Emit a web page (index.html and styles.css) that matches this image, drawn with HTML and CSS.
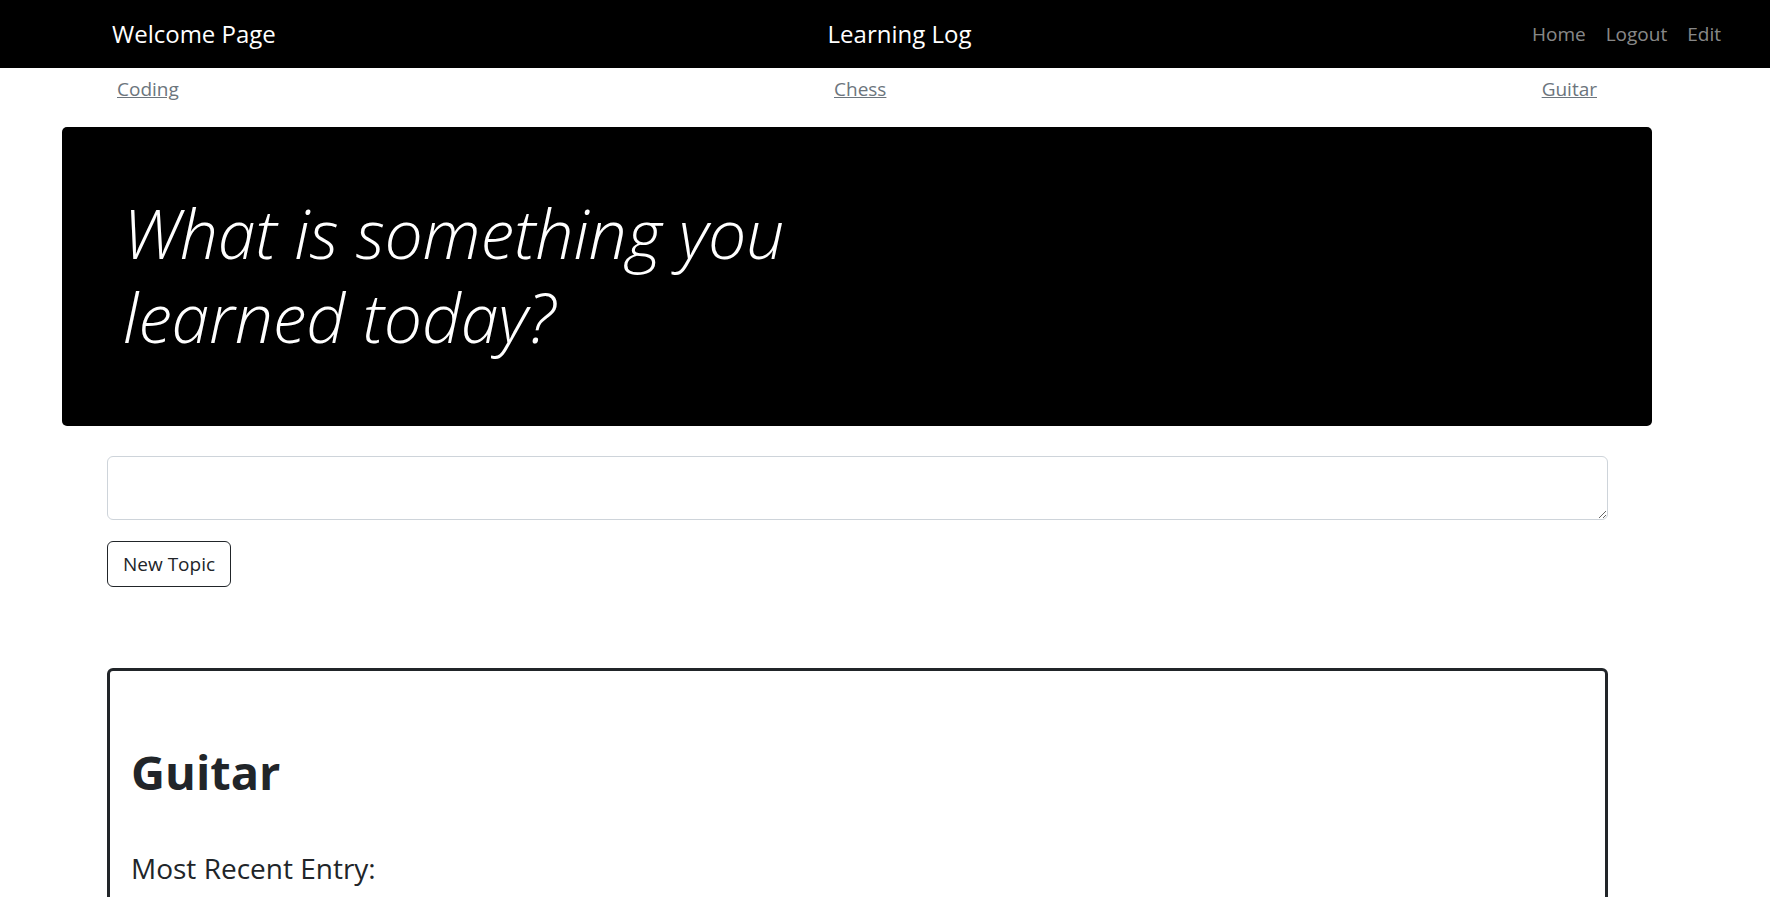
FILE: index.html
```html
<!DOCTYPE html>
<html lang="en">
<head>
<meta charset="utf-8">
<title>Learning Log</title>
<link rel="stylesheet" href="styles.css">
</head>
<body>
<nav class="navbar">
  <a class="brand" href="#">Welcome Page</a>
  <a class="title" href="#">Learning Log</a>
  <ul class="nav-links">
    <li><a href="#">Home</a></li>
    <li><a href="#">Logout</a></li>
    <li><a href="#">Edit</a></li>
  </ul>
</nav>
<div class="topics">
  <a href="#">Coding</a>
  <a href="#">Chess</a>
  <a href="#">Guitar</a>
</div>
<div class="jumbotron">
  <h1 class="display">What is something you learned today?</h1>
</div>
<form class="topic-form">
  <textarea class="form-control" aria-label="New topic"></textarea>
  <button type="button" class="btn">New Topic</button>
</form>
<div class="card">
  <h2 class="card-title">Guitar</h2>
  <p class="card-sub">Most Recent Entry:</p>
</div>
</body>
</html>
```
FILE: styles.css
```css
html, body {
  margin: 0;
  padding: 0;
  overflow: hidden;
}
body {
  font-family: "Open Sans", "Noto Sans", sans-serif;
  font-size: 20px;
  line-height: 1.5;
  color: #212529;
  background: #fff;
}
.navbar {
  height: 68px;
  background: #000;
  display: grid;
  grid-template-columns: 1fr auto 1fr;
  align-items: center;
  padding: 0 39px 0 112px;
  box-sizing: border-box;
}
.brand, .title {
  color: #fff;
  text-decoration: none;
  font-size: 24px;
  line-height: 1.5;
}
.brand { justify-self: start; }
.title { margin-right: 44px; }
.nav-links {
  justify-self: end;
  display: flex;
  list-style: none;
  margin: 0;
  padding: 0;
}
.nav-links a {
  display: block;
  padding: 0 10px;
  color: rgba(255, 255, 255, 0.55);
  text-decoration: none;
  font-size: 19px;
}
.topics {
  display: flex;
  justify-content: space-between;
  padding: 6px 173px 0 117px;
  height: 59px;
  box-sizing: border-box;
}
.topics a {
  color: #6c757d;
  font-size: 19px;
  line-height: 30px;
}
.jumbotron {
  background: #000;
  margin: 0 118px 0 62px;
  padding: 64px 60px 60px 61px;
  border-radius: 5px;
  height: 299px;
  box-sizing: border-box;
}
.display {
  margin: 0 0 10px;
  color: #fff;
  font-size: 68px;
  font-weight: 300;
  font-style: italic;
  line-height: 84px;
  max-width: 720px;
  letter-spacing: -0.2px;
}
.topic-form {
  margin: 30px 162px 0 107px;
  display: flex;
  flex-direction: column;
  align-items: flex-start;
}
.form-control {
  width: 100%;
  height: 64px;
  box-sizing: border-box;
  border: 1px solid #ced4da;
  border-radius: 6px;
  font: inherit;
  display: block;
  margin: 0;
}
.btn {
  margin-top: 21px;
  height: 46px;
  padding: 0 15px;
  border: 1px solid #212529;
  border-radius: 6px;
  background: #fff;
  color: #212529;
  font-family: inherit;
  font-size: 19px;
}
.card {
  margin: 81px 162px 0 107px;
  border: 3px solid #212529;
  border-radius: 6px;
  padding: 73px 21px 200px;
}
.card-title {
  margin: 0;
  font-size: 47px;
  font-weight: 700;
  line-height: 1.2;
}
.card-sub {
  margin: 52px 0 0;
  font-size: 28px;
  line-height: 1.2;
}
```
